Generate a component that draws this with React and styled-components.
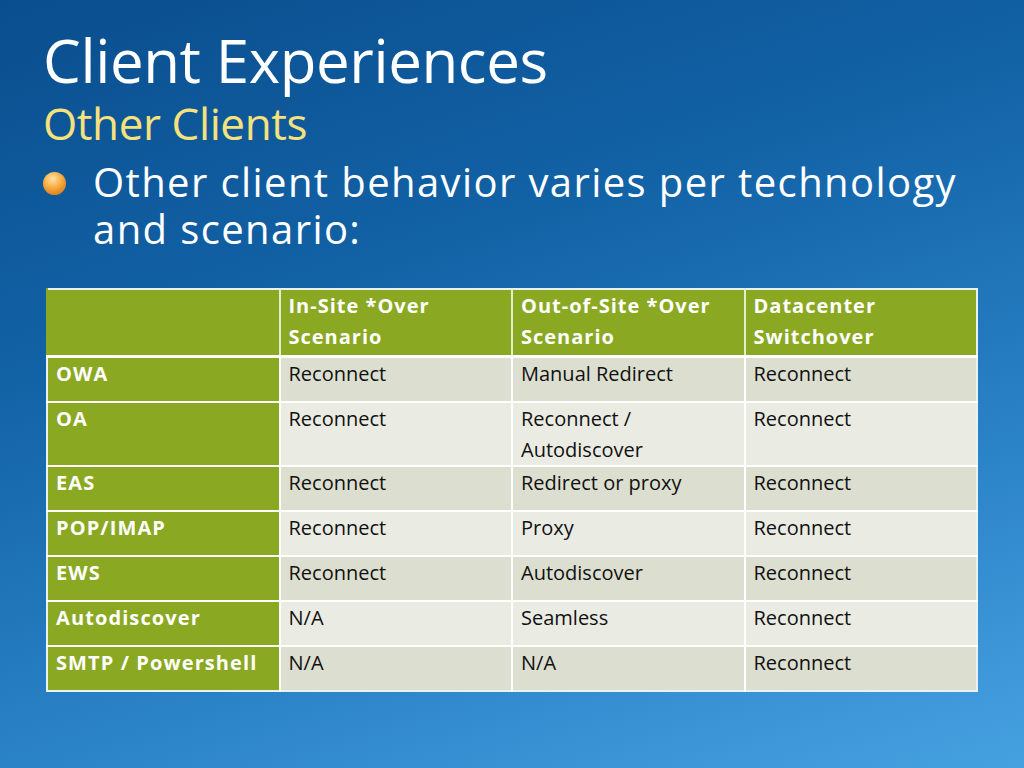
import React from "react";
import styled, { createGlobalStyle } from "styled-components";

const GlobalStyle = createGlobalStyle`
  html, body {
    margin: 0;
    padding: 0;
  }
  body {
    font-family: "Open Sans", "Noto Sans", sans-serif;
  }
`;

const Slide = styled.div`
  width: 1024px;
  height: 768px;
  box-sizing: border-box;
  padding: 24px 46px 0 43px;
  background: linear-gradient(162deg, #0a4e8e 0%, #1262a6 35%, #2b83c7 70%, #46a1e1 100%);
  overflow: hidden;
  color: #fff;
`;

const Title = styled.h1`
  margin: 0;
  font-weight: 400;
  font-size: 60px;
  line-height: 72px;
  letter-spacing: -0.4px;
`;

const Subtitle = styled.h2`
  margin: 2px 0 0;
  font-weight: 400;
  font-size: 44px;
  line-height: 50px;
  letter-spacing: -0.4px;
  color: #f6e27c;
`;

const Bullet = styled.div`
  display: flex;
  gap: 27px;
  margin-top: 10px;
`;

const Dot = styled.span`
  flex: none;
  width: 23px;
  height: 23px;
  margin-top: 14px;
  border-radius: 50%;
  background: radial-gradient(circle at 42% 30%, #ffe3a6 0%, #f7a93c 45%, #c7680f 100%);
`;

const BulletText = styled.p`
  margin: 0;
  font-size: 40px;
  line-height: 47px;
  letter-spacing: 1.4px;
`;

const Table = styled.table`
  margin-top: 36px;
  margin-left: 3px;
  width: 932px;
  border-collapse: collapse;
  table-layout: fixed;
  border: 2px solid #e8f2f4;
  font-size: 20px;
  line-height: 31px;
`;

const Row = styled.tr`
  height: 45px;
`;

const Th = styled.th`
  background: #8ba823;
  color: #fff;
  font-weight: 700;
  letter-spacing: 1px;
  text-align: left;
  vertical-align: top;
  padding: 0 8px 3px 8px;
  border-left: 2px solid ${(p) => (p.$first ? "#8ba823" : "#e4eecf")};
  border-bottom: 3px solid #fff;
`;

const RowHead = styled.th`
  background: #8ba823;
  color: #fff;
  font-weight: 700;
  letter-spacing: 1.1px;
  text-align: left;
  vertical-align: top;
  padding: 0 8px;
  border-top: 2px solid #fff;
`;

const Td = styled.td`
  background: ${(p) => (p.$alt ? "#eaece4" : "#dcdfd0")};
  color: #111;
  vertical-align: top;
  padding: 0 8px;
  border-left: 2px solid #fff;
  border-top: 2px solid #fff;
`;

const rows = [
  ["OWA", "Reconnect", "Manual Redirect", "Reconnect"],
  ["OA", "Reconnect", ["Reconnect /", "Autodiscover"], "Reconnect"],
  ["EAS", "Reconnect", "Redirect or proxy", "Reconnect"],
  ["POP/IMAP", "Reconnect", "Proxy", "Reconnect"],
  ["EWS", "Reconnect", "Autodiscover", "Reconnect"],
  ["Autodiscover", "N/A", "Seamless", "Reconnect"],
  ["SMTP / Powershell", "N/A", "N/A", "Reconnect"],
];

const headers = [
  ["In-Site *Over", "Scenario"],
  ["Out-of-Site *Over", "Scenario"],
  ["Datacenter", "Switchover"],
];

export default function App() {
  return (
    <>
      <GlobalStyle />
      <Slide>
        <Title>Client Experiences</Title>
        <Subtitle>Other Clients</Subtitle>
        <Bullet>
          <Dot />
          <BulletText>
            Other client behavior varies per technology
            <br />
            and scenario:
          </BulletText>
        </Bullet>
        <Table>
          <thead>
            <tr>
              <Th $first />
              {headers.map((h) => (
                <Th key={h[0]}>
                  {h[0]}
                  <br />
                  {h[1]}
                </Th>
              ))}
            </tr>
          </thead>
          <tbody>
            {rows.map((r, i) => (
              <Row key={r[0]}>
                <RowHead>{r[0]}</RowHead>
                {r.slice(1).map((c, j) => (
                  <Td key={j} $alt={i % 2 === 1}>
                    {Array.isArray(c) ? (
                      <>
                        {c[0]}
                        <br />
                        {c[1]}
                      </>
                    ) : (
                      c
                    )}
                  </Td>
                ))}
              </Row>
            ))}
          </tbody>
        </Table>
      </Slide>
    </>
  );
}
